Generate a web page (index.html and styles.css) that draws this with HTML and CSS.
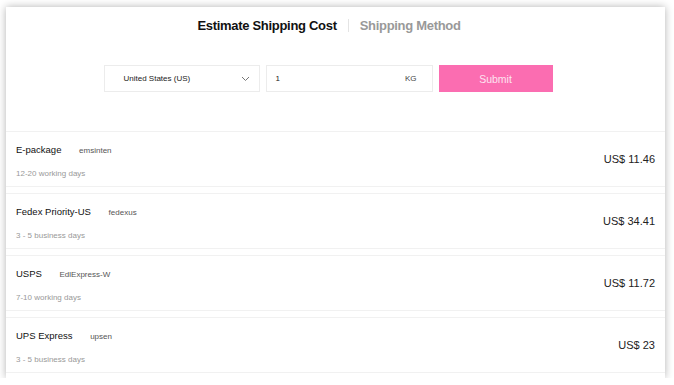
FILE: index.html
```html
<!DOCTYPE html>
<html lang="en">
<head>
    <meta charset="UTF-8">
    <title>Estimate Shipping Cost</title>
    <link rel="stylesheet" href="styles.css">
</head>
<body>
    <div class="card">
        <div class="tabs">
            <span class="tab active">Estimate Shipping Cost</span>
            <span class="tab-sep"></span>
            <span class="tab">Shipping Method</span>
        </div>

        <div class="form">
            <div class="select">
                <span>United States (US)</span>
                <svg class="chevron" width="9" height="6" viewBox="0 0 9 6">
                    <path d="M1 1l3.5 3.5L8 1" fill="none" stroke="#777" stroke-width="1"/>
                </svg>
            </div>
            <div class="weight">
                <span>1</span>
                <span class="unit">KG</span>
            </div>
            <button class="submit">Submit</button>
        </div>

        <div class="methods">
            <div class="method">
                <div class="info">
                    <div class="name">E-package <span class="code">emsinten</span></div>
                    <div class="days">12-20 working days</div>
                </div>
                <div class="price">US$ 11.46</div>
            </div>
            <div class="method">
                <div class="info">
                    <div class="name">Fedex Priority-US <span class="code">fedexus</span></div>
                    <div class="days">3 - 5 business days</div>
                </div>
                <div class="price">US$ 34.41</div>
            </div>
            <div class="method">
                <div class="info">
                    <div class="name">USPS <span class="code">EdlExpress-W</span></div>
                    <div class="days">7-10 working days</div>
                </div>
                <div class="price">US$ 11.72</div>
            </div>
            <div class="method">
                <div class="info">
                    <div class="name">UPS Express <span class="code">upsen</span></div>
                    <div class="days">3 - 5 business days</div>
                </div>
                <div class="price">US$ 23</div>
            </div>
        </div>
    </div>
</body>
</html>
```

FILE: styles.css
```css
body {
    font-family: "Liberation Sans", Arial, sans-serif;
    margin: 0;
    padding: 7px 9px 0 6px;
    background-color: #fff;
    color: #222;
}

.card {
    height: 371px;
    background: #fff;
    box-shadow: 0 0 8px rgba(0, 0, 0, 0.3);
    overflow: hidden;
}

.tabs {
    display: flex;
    justify-content: center;
    align-items: center;
    padding-top: 10px;
    height: 16px;
    padding-right: 13px;
}

.tab {
    font-size: 13px;
    font-weight: bold;
    color: #999;
    letter-spacing: -0.3px;
}

.tab.active {
    color: #111;
}

.tab-sep {
    width: 1px;
    height: 13px;
    background: #e4e4e4;
    margin: 0 11px 0 11px;
}

.form {
    display: flex;
    justify-content: center;
    gap: 6px;
    margin-top: 32px;
    padding-right: 15px;
}

.select,
.weight {
    height: 27px;
    border: 1px solid #ececec;
    box-sizing: border-box;
    display: flex;
    align-items: center;
    font-size: 8px;
    color: #222;
}

.select {
    width: 156px;
    padding: 0 9px 0 19px;
    justify-content: space-between;
}

.weight {
    width: 167px;
    padding: 0 15px 0 9px;
    justify-content: space-between;
}

.unit {
    color: #444;
}

.submit {
    width: 114px;
    height: 27px;
    border: none;
    background-color: #fb6db1;
    color: #fde4f0;
    font-family: inherit;
    font-size: 10.5px;
    padding: 0;
}

.methods {
    margin-top: 39px;
    display: flex;
    flex-direction: column;
    gap: 6px;
}

.method {
    height: 56px;
    box-sizing: border-box;
    border-top: 1px solid #f1f1f1;
    border-bottom: 1px solid #f1f1f1;
    display: flex;
    justify-content: space-between;
    align-items: center;
    padding: 0 10px 0 10px;
}

.name {
    font-size: 9.5px;
    color: #111;
    margin-top: 4px;
}

.code {
    font-size: 8px;
    color: #555;
    margin-left: 15px;
}

.days {
    font-size: 8px;
    color: #999;
    margin-top: 14px;
}

.price {
    font-size: 11px;
    color: #222;
}
```
